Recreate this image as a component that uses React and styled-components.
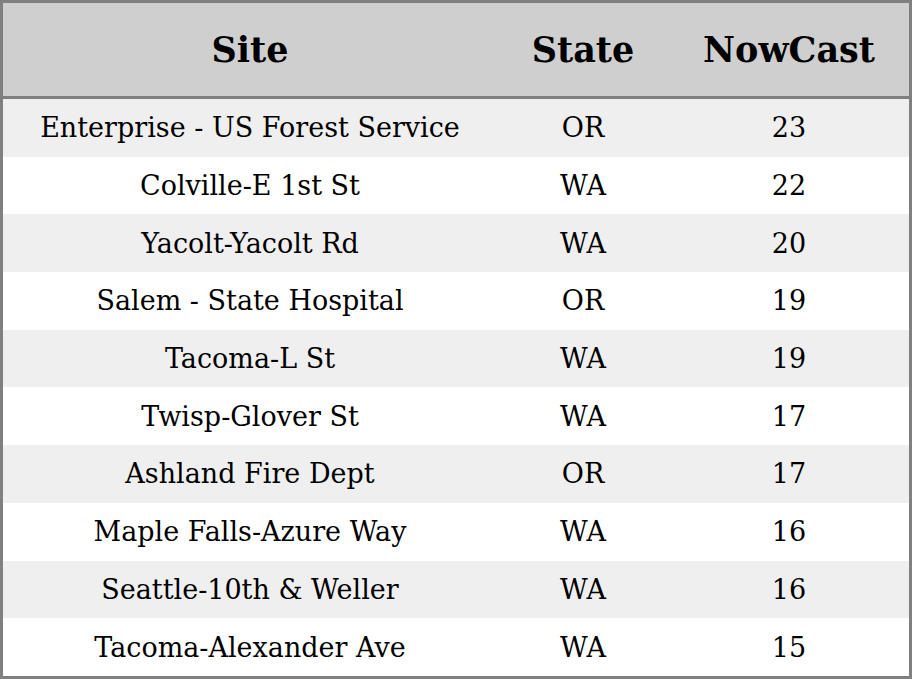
import React from 'react';
import styled, { createGlobalStyle } from 'styled-components';

const GlobalStyle = createGlobalStyle`
  html, body {
    margin: 0;
    padding: 0;
    background: #ffffff;
  }
`;

const Table = styled.table`
  width: 912px;
  height: 679px;
  box-sizing: border-box;
  border-collapse: collapse;
  border: 3px solid #808080;
  font-family: 'DejaVu Serif', serif;
  color: #000;
`;

const HeadCell = styled.th`
  height: 93px;
  padding: 0;
  background: #cfcfcf;
  border-bottom: 3px solid #808080;
  font-size: 35px;
  font-weight: bold;
  text-align: center;
  width: ${(p) => p.$w}px;
`;

const Row = styled.tr`
  background: ${(p) => (p.$alt ? '#efefef' : '#ffffff')};
`;

const Cell = styled.td`
  padding: 0;
  font-size: 27px;
  text-align: center;
  height: 57.7px;
`;

const rows = [
  ['Enterprise - US Forest Service', 'OR', 23],
  ['Colville-E 1st St', 'WA', 22],
  ['Yacolt-Yacolt Rd', 'WA', 20],
  ['Salem - State Hospital', 'OR', 19],
  ['Tacoma-L St', 'WA', 19],
  ['Twisp-Glover St', 'WA', 17],
  ['Ashland Fire Dept', 'OR', 17],
  ['Maple Falls-Azure Way', 'WA', 16],
  ['Seattle-10th & Weller', 'WA', 16],
  ['Tacoma-Alexander Ave', 'WA', 15],
];

const App = () => {
  return (
    <>
      <GlobalStyle />
      <Table>
        <thead>
          <tr>
            <HeadCell $w={494}>Site</HeadCell>
            <HeadCell $w={172}>State</HeadCell>
            <HeadCell $w={240}>NowCast</HeadCell>
          </tr>
        </thead>
        <tbody>
          {rows.map((r, i) => (
            <Row key={r[0]} $alt={i % 2 === 0}>
              <Cell>{r[0]}</Cell>
              <Cell>{r[1]}</Cell>
              <Cell>{r[2]}</Cell>
            </Row>
          ))}
        </tbody>
      </Table>
    </>
  );
};

export default App;
